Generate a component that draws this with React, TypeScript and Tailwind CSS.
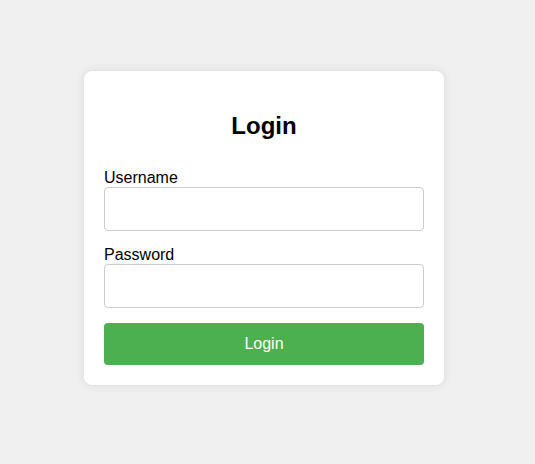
export default function App() {
  return (
    <div className="min-h-[464px] bg-[#f0f0f0] flex justify-center items-start pt-[71px] pr-[7px] font-['Liberation_Sans',Arial,sans-serif]">
      <div className="w-[360px] bg-white rounded-lg shadow-[0_0_10px_rgba(0,0,0,0.1)] p-5">
        <h2 className="text-center text-[24px] font-bold text-black leading-[28px] mt-[21px] mb-[29px]">Login</h2>
        <form onSubmit={(e) => e.preventDefault()} className="flex flex-col">
          <label htmlFor="username" className="text-[16px] leading-[18px] text-black">Username</label>
          <input id="username" type="text" className="h-[44px] w-full border border-[#ccc] rounded px-[10px] text-[16px] mb-[15px] outline-none" />
          <label htmlFor="password" className="text-[16px] leading-[18px] text-black">Password</label>
          <input id="password" type="password" className="h-[44px] w-full border border-[#ccc] rounded px-[10px] text-[16px] mb-[15px] outline-none" />
          <button type="submit" className="h-[42px] w-full bg-[#4caf50] text-white text-[16px] rounded">Login</button>
        </form>
      </div>
    </div>
  )
}
